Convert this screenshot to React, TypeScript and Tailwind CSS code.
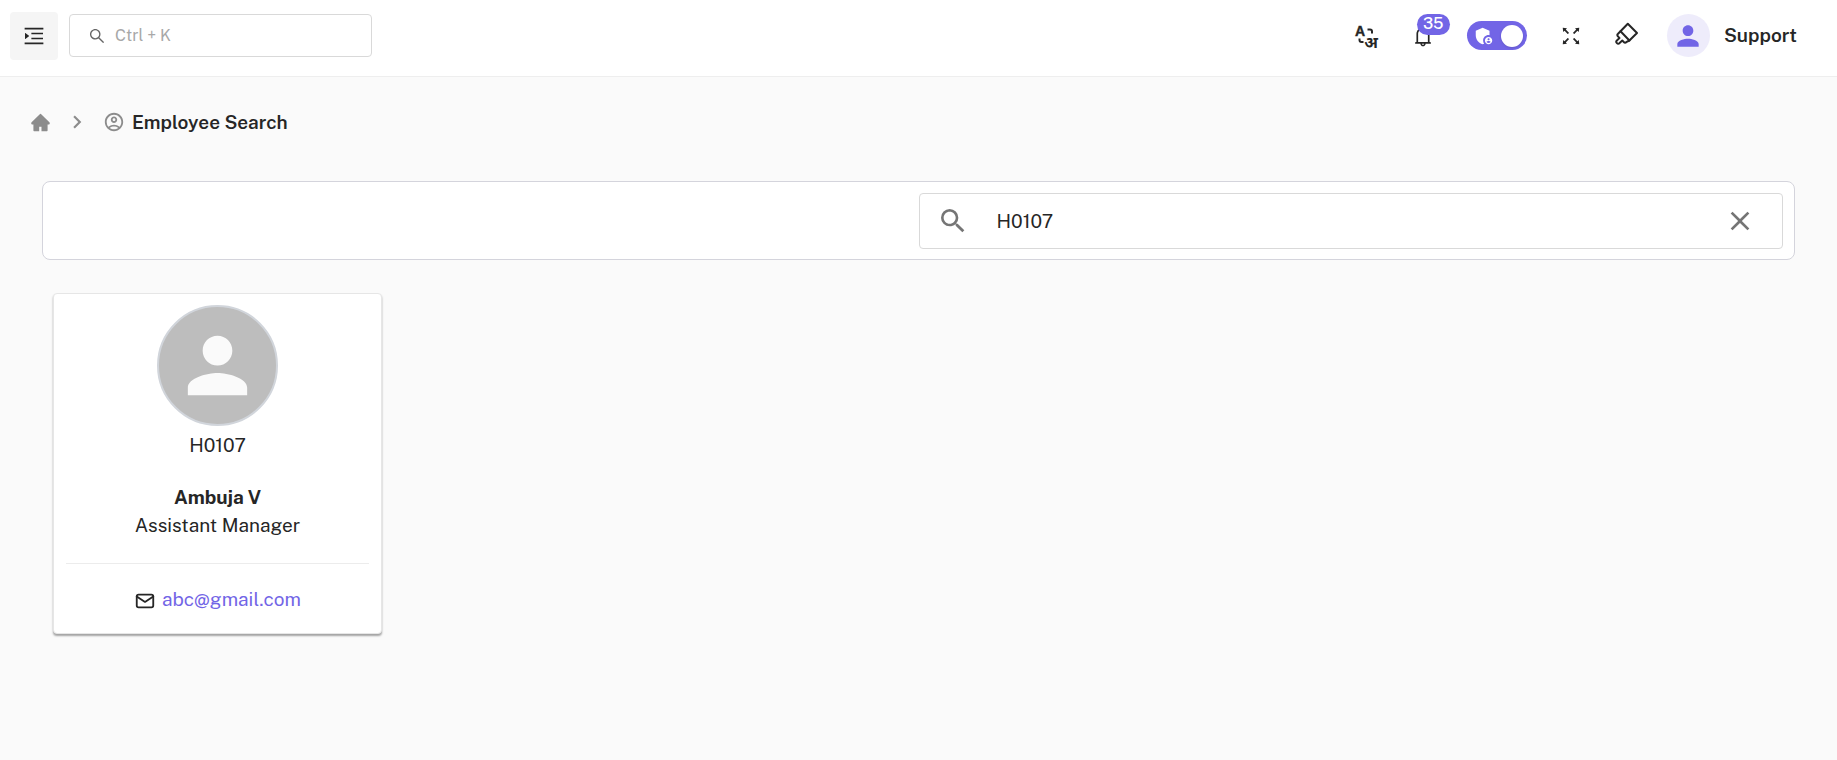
import { useState } from "react";
import {
  AiOutlineMenuUnfold,
  AiOutlineSearch,
  AiFillHome,
  AiOutlineBell,
  AiOutlineFullscreen,
} from "react-icons/ai";
import {
  MdAdminPanelSettings,
  MdChevronRight,
  MdClose,
  MdOutlineAccountCircle,
  MdPerson,
  MdSearch,
} from "react-icons/md";
import { TbMail } from "react-icons/tb";

function TranslateIcon() {
  return (
    <svg viewBox="0 0 24 24" className="size-6 overflow-visible" fill="currentColor" aria-hidden="true">
      <text
        x="0"
        y="12"
        fontSize="14"
        fontWeight="700"
        fontFamily="Liberation Sans"
        stroke="currentColor"
        strokeWidth="0.4"
      >
        A
      </text>
      <text
        x="23"
        y="23.500"
        fontSize="16"
        fontWeight="700"
        fontFamily="Noto Sans"
        textAnchor="end"
      >
        अ
      </text>
      <path
        d="M12.500 5.500h2.500a2 2 0 0 1 2 2V9.500M4.500 14.500v1.500a2 2 0 0 0 2 2H8.500"
        fill="none"
        stroke="currentColor"
        strokeWidth="2"
      />
    </svg>
  );
}

function BrushIcon() {
  return (
    <svg
      viewBox="0 0 24 24"
      className="size-6"
      fill="none"
      stroke="currentColor"
      strokeWidth="2"
      strokeLinejoin="round"
      strokeLinecap="round"
      aria-hidden="true"
    >
      <path d="M5.500 9.300 12.800 1.800l9.200 9.200-7.600 7.500z" />
      <path d="M5.500 9.300 2.800 12a1.500 1.500 0 0 0 0 2.200l1.700 1.900-2.600 2.300a1.900 1.900 0 0 0 2.700 2.700l2.700-2.500 1.700 1.600a1.500 1.500 0 0 0 2.200 0l3.200-1.700" />
    </svg>
  );
}

function Header() {
  const [on, setOn] = useState(true);
  return (
    <header className="flex h-[77px] items-center justify-between border-b border-[#eeeeee] bg-white pb-[5px] pl-2.5 pr-10">
      <div className="flex items-center gap-[11px]">
        <button aria-label="Toggle menu" className="flex size-12 items-center justify-center rounded bg-[#f5f5f5]">
          <AiOutlineMenuUnfold className="size-6" />
        </button>
        <label className="flex h-[43px] w-[303px] items-center gap-[9px] rounded border border-[#d9d9d9] px-[18px]">
          <AiOutlineSearch className="size-[18px] shrink-0 text-[#666666]" />
          <input
            aria-label="Search"
            placeholder="Ctrl + K"
            className="w-full min-w-0 bg-transparent text-base outline-none placeholder:text-[#a8a8a8]"
          />
        </label>
      </div>
      <div className="flex items-center">
        <button aria-label="Language" className="mr-8">
          <TranslateIcon />
        </button>
        <button aria-label="Notifications, 35 unread" className="relative mr-8">
          <AiOutlineBell className="size-6" />
          <span className="absolute -top-2.5 left-1.5 flex h-[21px] items-center rounded-full bg-[#7265e6] px-1.5 text-base font-medium text-white">
            35
          </span>
        </button>
        <label className="relative mr-8 flex h-[29px] w-[60px] cursor-pointer items-center justify-between rounded-full bg-[#7265e6] px-1 has-focus-visible:ring-2">
          <input
            type="checkbox"
            role="switch"
            aria-label="Admin mode"
            checked={on}
            onChange={(e) => setOn(e.target.checked)}
            className="sr-only"
          />
          <MdAdminPanelSettings className="ml-0.5 size-[22px] text-white" />
          <span className="size-[22px] rounded-full bg-white shadow" />
        </label>
        <button aria-label="Full screen" className="mr-8">
          <AiOutlineFullscreen className="size-6" />
        </button>
        <button aria-label="Theme" className="mr-7 pb-1">
          <BrushIcon />
        </button>
        <button className="flex items-center gap-3.5 text-[19px] font-semibold">
          <span className="flex size-[43px] items-center justify-center rounded-full bg-[#eeecfb]">
            <MdPerson className="size-8 text-[#7265e6]" />
          </span>
          Support
        </button>
      </div>
    </header>
  );
}

function Breadcrumbs() {
  return (
    <nav aria-label="Breadcrumb" className="flex h-6 items-center pl-[30px]">
      <a href="#home" aria-label="Home">
        <AiFillHome className="size-[21px] text-[#8c8c8c]" />
      </a>
      <MdChevronRight className="mx-[13px] size-[26px] text-[#8c8c8c]" />
      <MdOutlineAccountCircle className="mr-[7px] size-[22px] text-[#8c8c8c]" />
      <span className="text-[19px] font-semibold">Employee Search</span>
    </nav>
  );
}

function EmployeeCard() {
  return (
    <article className="flex w-[329px] flex-col items-center rounded border border-[#e6e6e6] bg-white px-3 pt-[11px] text-[19px] leading-7 shadow-[0_2px_2px_rgba(0,0,0,0.35)]">
      <span className="flex size-[121px] items-center justify-center rounded-full border-2 border-[#d1d5db] bg-[#bdbdbd]">
        <MdPerson className="size-[89px] shrink-0 text-[#fafafa]" />
      </span>
      <p className="mt-[5px]">H0107</p>
      <h2 className="mt-6 font-bold">Ambuja V</h2>
      <p>Assistant Manager</p>
      <hr className="mt-6 w-full border-[#ececec]" />
      <div className="flex h-[69px] items-center gap-1.5">
        <TbMail className="mt-1 size-[22px]" />
        <a href="mailto:abc@gmail.com" className="text-[#7265e6]">
          abc@gmail.com
        </a>
      </div>
    </article>
  );
}

export default function App() {
  const [query, setQuery] = useState("H0107");
  return (
    <div className="min-h-screen bg-[#fafafa] font-['Public_Sans',Inter,sans-serif] text-[#262626]">
      <Header />
      <main className="pt-[33px]">
        <Breadcrumbs />
        <div className="px-[42px] pt-[47px]">
          <section className="flex justify-end rounded-lg border border-[#d4d4dc] bg-white px-[11px] pb-2.5 pt-[11px]">
            <label className="flex h-14 w-1/2 items-center rounded border border-[#d9d9d9] pl-[17px] pr-[26px]">
              <MdSearch className="size-8 shrink-0 text-[#757575]" />
              <input
                aria-label="Search employees"
                value={query}
                onChange={(e) => setQuery(e.target.value)}
                className="ml-7 min-w-0 flex-1 bg-transparent text-[19px] outline-none"
              />
              <button aria-label="Clear search" onClick={() => setQuery("")}>
                <MdClose className="size-8 text-[#757575]" />
              </button>
            </label>
          </section>
          <section className="px-[11px] pt-[33px]">
            <EmployeeCard />
          </section>
        </div>
      </main>
    </div>
  );
}
